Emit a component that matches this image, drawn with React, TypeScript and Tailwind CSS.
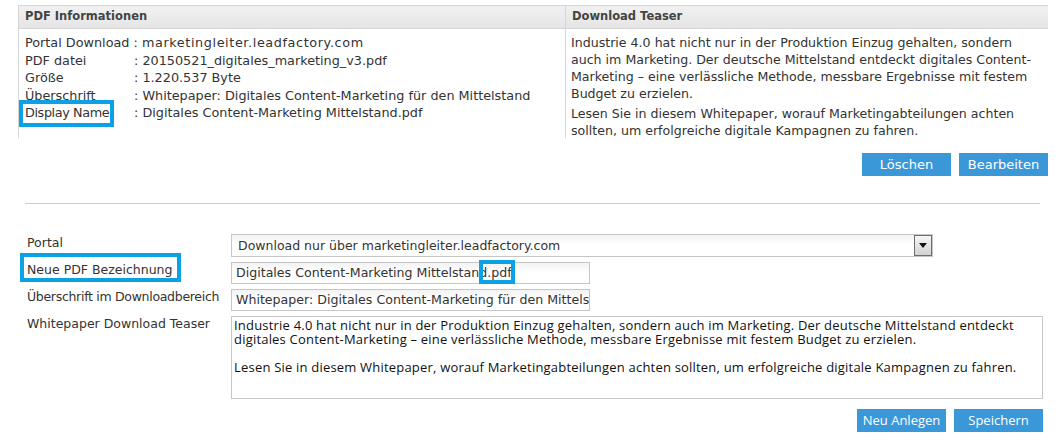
const V = "font-['DejaVu_Sans',Verdana,sans-serif]";
const T = "font-['Open_Sans','Noto_Sans',sans-serif]";

function Hl({ className }: { className: string }) {
  return <span className={`pointer-events-none absolute border-4 border-[#0aa2e4] ${className}`} />;
}

function InfoRow({ label, value, hl }: { label: string; value: string; hl?: boolean }) {
  return (
    <div className="flex h-[17.5px] items-center whitespace-nowrap">
      <span className="inline-block w-[109px]">
        <span className={hl ? "relative tracking-[-0.4px]" : "relative"}>
          {label}
          {hl && <Hl className="-bottom-[7px] -left-[6px] -right-[5px] -top-[5px]" />}
        </span>
      </span>
      <span>: {value}</span>
    </div>
  );
}

function Btn({ children, className = "" }: { children: React.ReactNode; className?: string }) {
  return (
    <button className={`h-[23px] w-[89px] bg-[#3a98d8] text-[13px] leading-[23px] text-white ${className}`}>
      {children}
    </button>
  );
}

export default function App() {
  return (
    <div className={`${V} h-[445px] w-[1059px] bg-white text-[#333]`}>
      {/* top table */}
      <div className="pl-[18px] pr-[11px] pt-[5px]">
        <div className="grid grid-cols-[547px_1fr] border-t border-[#d6d6d6]">
          <div className="flex h-[23px] items-center border-b border-l border-[#d6d6d6] bg-gradient-to-b from-[#f1f1f1] to-[#e5e5e5] pl-[6px] text-[11.5px] font-bold text-[#444]">
            PDF Informationen
          </div>
          <div className="flex h-[23px] items-center border-b border-l border-[#d6d6d6] bg-gradient-to-b from-[#f1f1f1] to-[#e5e5e5] pl-[6px] text-[11.5px] font-bold text-[#444]">
            Download Teaser
          </div>
          <div className="h-[109px] border-l border-[#d6d6d6] pl-[6px] pt-[5px] text-[12.8px]">
            <div className="flex h-[17.5px] items-center whitespace-nowrap">
              <span>Portal Download :&nbsp;</span>
              <span className="tracking-[0.6px]">marketingleiter.leadfactory.com</span>
            </div>
            <InfoRow label="PDF datei" value="20150521_digitales_marketing_v3.pdf" />
            <InfoRow label="Größe" value="1.220.537 Byte" />
            <InfoRow label="Überschrift" value="Whitepaper: Digitales Content-Marketing für den Mittelstand" />
            <InfoRow label="Display Name" value="Digitales Content-Marketing Mittelstand.pdf" hl />
          </div>
          <div className="h-[109px] border-l border-[#d6d6d6] pl-[5px] pr-[12px] pt-[5px] text-[12.6px] leading-[17px]">
            <p>
              Industrie 4.0 hat nicht nur in der Produktion Einzug gehalten, sondern auch im Marketing. Der deutsche
              Mittelstand entdeckt digitales Content-Marketing – eine verlässliche Methode, messbare Ergebnisse mit
              festem Budget zu erzielen.
            </p>
            <p className="mt-[3px]">
              Lesen Sie in diesem Whitepaper, worauf Marketingabteilungen achten sollten, um erfolgreiche digitale
              Kampagnen zu fahren.
            </p>
          </div>
        </div>
        <div className="mt-[15px] flex justify-end gap-[8px]">
          <Btn>Löschen</Btn>
          <Btn>Bearbeiten</Btn>
        </div>
      </div>

      <div className="ml-[25px] mr-[19px] mt-[27px] h-px bg-[#cccccc]" />

      {/* form */}
      <div className="mt-[30px] pl-[27px] pr-[16px]">
        <div className="grid grid-cols-[204px_1fr] gap-y-[5px] text-[12.5px] leading-[15px]">
          <div className="pt-[1px]">Portal</div>
          <div className="relative flex h-[23px] w-[702px] items-center border border-[#c6c6c6] bg-gradient-to-b from-[#f3f3f3] via-white to-white pl-[6px] text-[12.5px]">
            Download nur über marketingleiter.leadfactory.com
            <div className="absolute right-0 top-0 flex h-[21px] w-[18px] items-center justify-center border border-[#6e6e6e] bg-gradient-to-b from-[#f6f6f6] to-[#d2d2d2]">
              <svg width="8" height="5" viewBox="0 0 8 5">
                <path d="M0 0h8L4 5z" fill="#111" />
              </svg>
            </div>
          </div>

          <div className="whitespace-nowrap">
            <span className="relative">
              Neue PDF Bezeichnung
              <Hl className="-bottom-[5px] -left-[7px] -right-[9px] -top-[9px]" />
            </span>
          </div>
          <div className="h-[22px] w-[359px] border border-[#c6c6c6] bg-gradient-to-b from-[#f3f3f3] via-white to-white pl-[4px] text-[12.6px] leading-[20px]">
            Digitales Content-Marketing Mittelstand
            <span className="relative">
              .pdf
              <Hl className="-bottom-[4px] -left-[8px] -right-[3px] -top-[5px]" />
            </span>
          </div>

          <div className="whitespace-nowrap tracking-[-0.3px]">Überschrift im Downloadbereich</div>
          <div className="h-[22px] w-[359px] overflow-hidden whitespace-nowrap border border-[#c6c6c6] bg-gradient-to-b from-[#f3f3f3] via-white to-white pl-[4px] text-[12.6px] leading-[20px]">
            Whitepaper: Digitales Content-Marketing für den Mittelstand
          </div>

          <div className="whitespace-nowrap">Whitepaper Download Teaser</div>
          <div
            className={`${T} h-[83px] w-[812px] border border-[#c6c6c6] bg-white pl-[2px] pt-[1px] text-[13px] leading-[14px] tracking-[0.2px] text-[#111]`}
          >
            <p>
              Industrie 4.0 hat nicht nur in der Produktion Einzug gehalten, sondern auch im Marketing. Der deutsche
              Mittelstand entdeckt digitales Content-Marketing – eine verlässliche Methode, messbare Ergebnisse mit
              festem Budget zu erzielen.
            </p>
            <p className="mt-[14px]">
              Lesen Sie in diesem Whitepaper, worauf Marketingabteilungen achten sollten, um erfolgreiche digitale
              Kampagnen zu fahren.
            </p>
          </div>
        </div>
        <div className="mt-[10px] flex justify-end gap-[8px]">
          <Btn className={T}>Neu Anlegen</Btn>
          <Btn className={T}>Speichern</Btn>
        </div>
      </div>
    </div>
  );
}
